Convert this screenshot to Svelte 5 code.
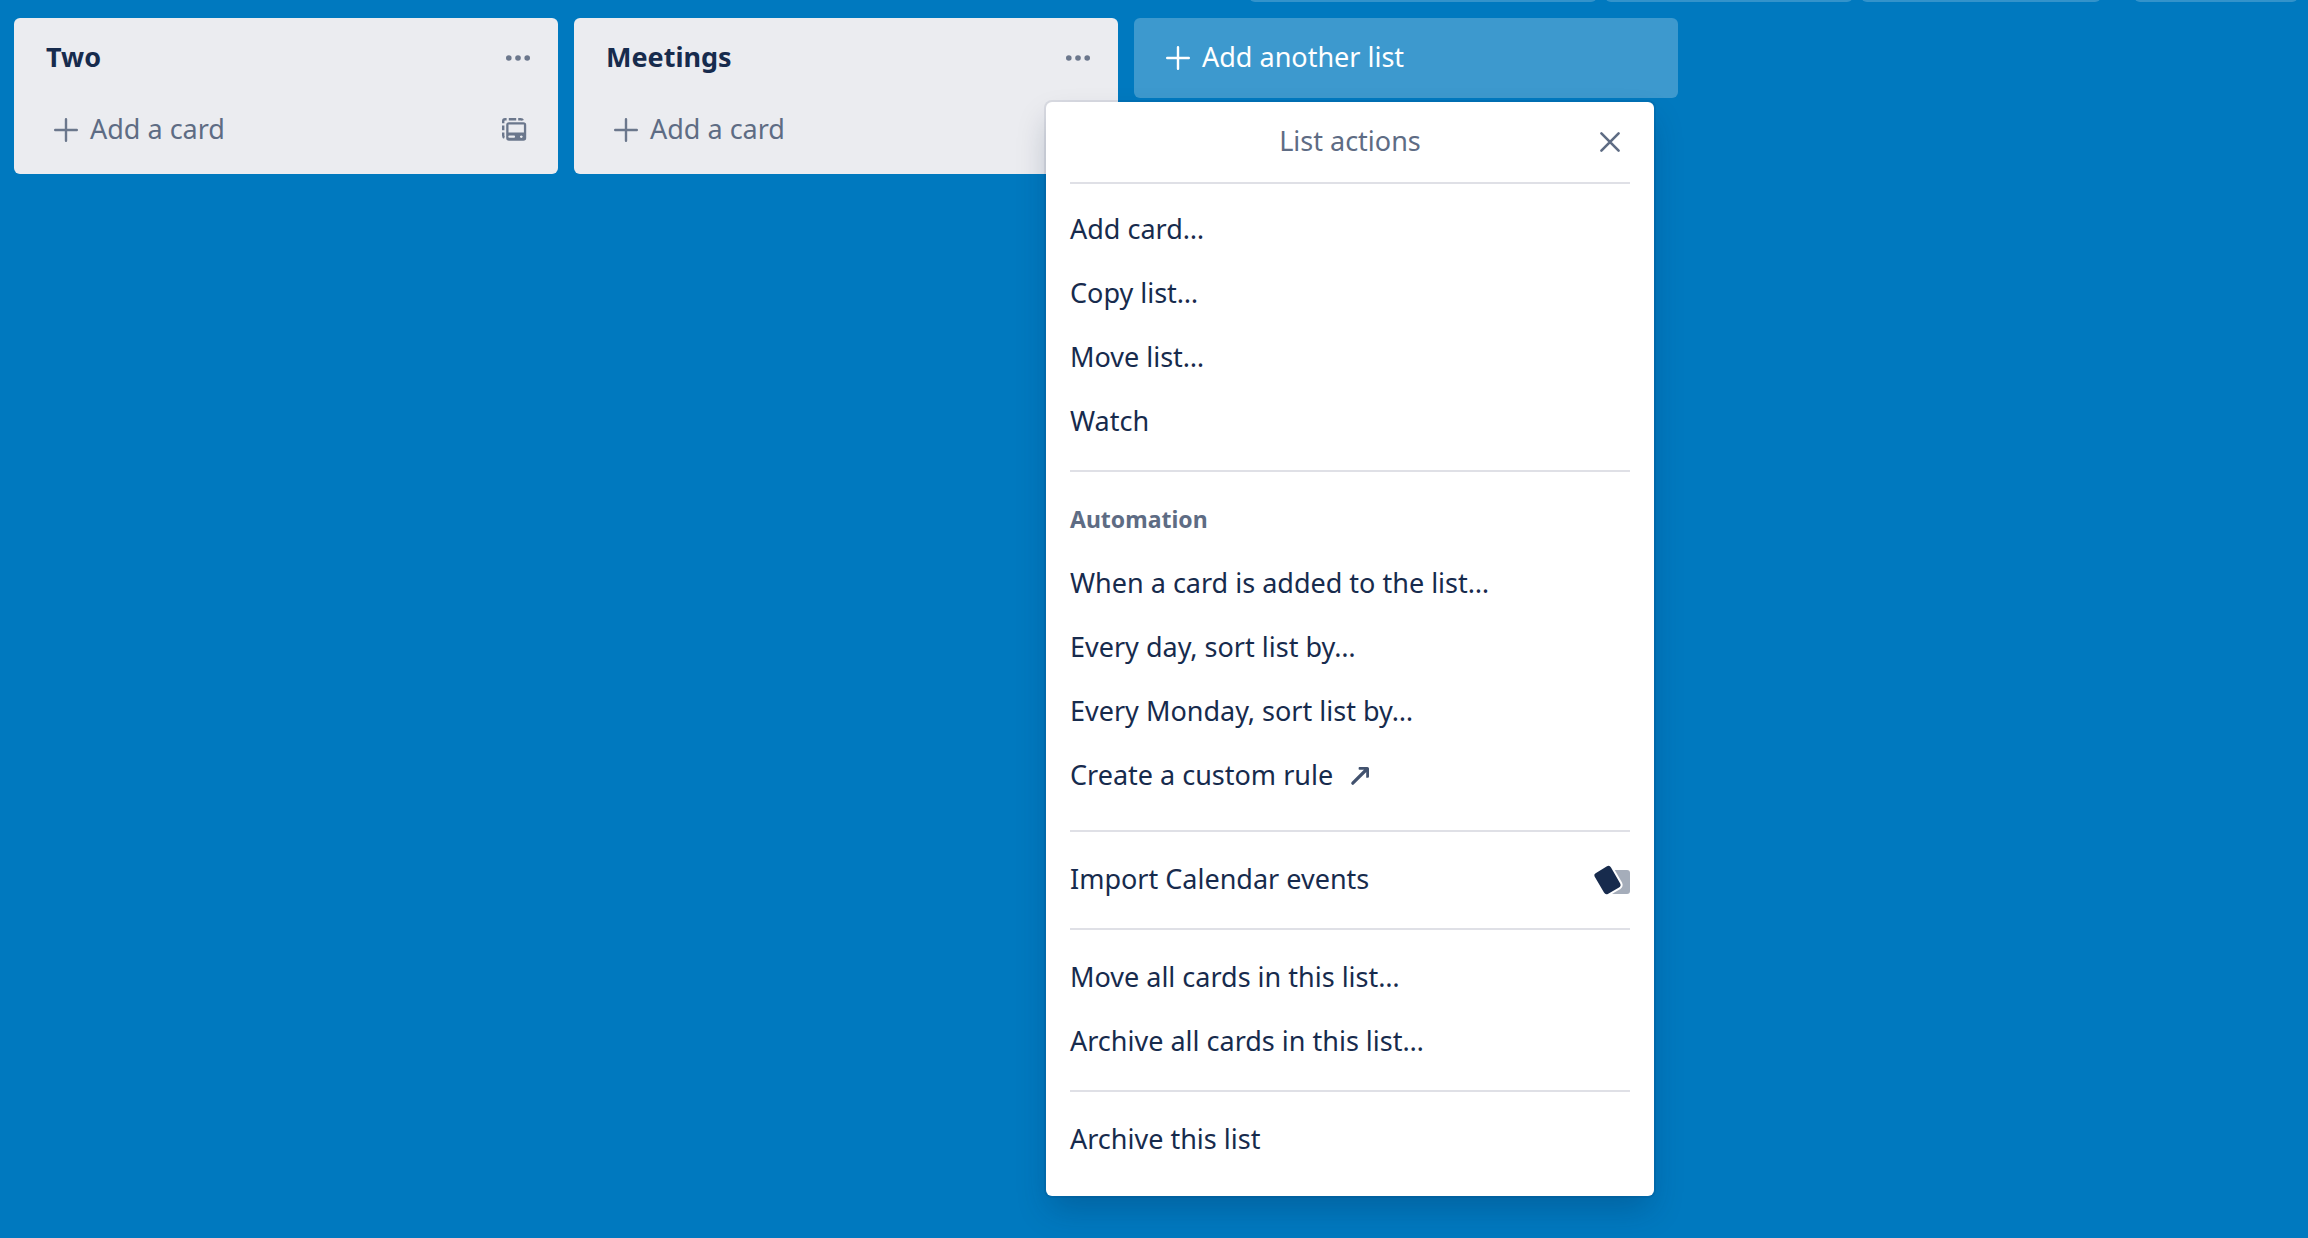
<script>
  const tabs = ['wide', 'medium', 'small', 'menu'];
  const lists = [
    { name: 'Two', open: false },
    { name: 'Meetings', open: true },
  ];
  const groups = [
    { items: ['Add card…', 'Copy list…', 'Move list…', 'Watch'] },
    {
      title: 'Automation',
      items: [
        'When a card is added to the list…',
        'Every day, sort list by…',
        'Every Monday, sort list by…',
        'Create a custom rule',
      ],
    },
    { items: ['Import Calendar events'] },
    { items: ['Move all cards in this list…', 'Archive all cards in this list…'] },
    { items: ['Archive this list'] },
  ];
</script>

{#snippet plus()}
  <svg class="plus" viewBox="0 0 24 24" aria-hidden="true">
    <path d="M12 1.2v21.6M1.2 12h21.6" />
  </svg>
{/snippet}

<div class="page">
  <div class="toolbar" aria-hidden="true">
    {#each tabs as tab}
      <span class="tab {tab}"></span>
    {/each}
  </div>

  <main class="board">
    {#each lists as list}
      <section class="list">
        <header class="list-head">
          <h2 class="label">{list.name}</h2>
          <button class="icon-button" aria-label="List actions for {list.name}">
            <svg viewBox="0 0 24 24" aria-hidden="true">
              <circle cx="2.8" cy="12" r="2.8" />
              <circle cx="12" cy="12" r="2.8" />
              <circle cx="21.2" cy="12" r="2.8" />
            </svg>
          </button>
        </header>
        <div class="list-foot">
          <button class="add-card">{@render plus()}<span class="label">Add a card</span></button>
          <button class="icon-button" aria-label="Create from template">
            <svg viewBox="0 0 24 24" aria-hidden="true">
              <path class="line" d="M1.2 5.2V3Q1.2 1.2 3 1.2H4.6M6.8 1.2H14.2M16.2 1.2H18.6Q20.4 1.2 20.8 2.4M1.2 7.4V12.2M1.2 14.4V17.6Q1.2 19.2 2.4 19.6" />
              <path fill-rule="evenodd" d="M7 4.2H21.4Q24.2 4.2 24.2 7V20Q24.2 22.8 21.4 22.8H7Q4.2 22.8 4.2 20V7Q4.2 4.2 7 4.2ZM6.5 6.5V14.6H21.9V6.5ZM7.4 17.6a1 1 0 0 0 0 2.2H12a1 1 0 0 0 0-2.2ZM19.3 17.4a1.3 1.3 0 1 0 .01 0Z" />
            </svg>
          </button>
        </div>

        {#if list.open}
          <div class="popover" role="dialog" aria-label="List actions">
            <header class="popover-head">
              <span class="label">List actions</span>
              <button class="close" aria-label="Close">
                <svg viewBox="0 0 20 20" aria-hidden="true"><path d="M1.4 1.4l17.2 17.2M18.6 1.4L1.4 18.6" /></svg>
              </button>
            </header>
            {#each groups as group}
              <div class="group">
                {#if group.title}<h3><span class="label">{group.title}</span></h3>{/if}
                <ul>
                  {#each group.items as item}
                    <li>
                      <button class="action">
                        <span class="label">{item}</span>
                        {#if item === 'Create a custom rule'}
                          <svg class="arrow" viewBox="0 0 18 18" aria-hidden="true">
                            <path class="shaft" d="M1.8 16.2L15 3" />
                            <path d="M8.4 0H16.4Q18 0 18 1.6V9.6Q18 10.8 16.8 10.8H15.2V5L13 2.8H8.4Q7.6 2.8 7.6 1.4Q7.6 0 8.4 0Z" />
                          </svg>
                        {:else if item === 'Import Calendar events'}
                          <svg class="cards" viewBox="0 0 36 30" aria-hidden="true">
                            <rect class="back" x="17" y="5" width="19" height="24" rx="3" />
                            <path class="front" d="M1.6 8.2L13 1.2Q15.6 0 17 2.4L26.2 18.4Q27.4 21 25 22.6L13.8 29Q11.4 30 10 27.6L.6 11.6Q-.6 9.6 1.6 8.2Z" />
                          </svg>
                        {/if}
                      </button>
                    </li>
                  {/each}
                </ul>
              </div>
            {/each}
          </div>
        {/if}
      </section>
    {/each}

    <button class="add-list">{@render plus()}<span class="label">Add another list</span></button>
  </main>
</div>

<style>
  :global(body) {
    background: #0079bf;
  }

  .page {
    min-height: 100vh;
    box-sizing: border-box;
    background: #0079bf;
    color: #172b4d;
    font-family: 'Noto Sans', sans-serif;
    font-size: 27px;
    line-height: 38px;
  }

  .page * {
    box-sizing: border-box;
  }

  button {
    margin: 0;
    padding: 0;
    border: 0;
    background: none;
    color: inherit;
    font: inherit;
    text-align: left;
    cursor: pointer;
  }

  h2,
  h3,
  ul {
    margin: 0;
    padding: 0;
    list-style: none;
  }

  svg {
    display: block;
    flex: none;
    overflow: visible;
  }

  /* Every row of text is 40px high, with the text seated a little above the middle. */
  .label {
    display: block;
    padding-bottom: 2px;
  }

  .toolbar {
    display: flex;
    justify-content: flex-end;
    align-items: flex-end;
    gap: 8px;
    height: 2px;
    padding-right: 10px;
    overflow: hidden;
  }

  .tab {
    flex: none;
    height: 64px;
    border-radius: 6px;
    background: rgba(255, 255, 255, 0.2);
  }

  .wide {
    width: 348px;
  }

  .medium {
    width: 248px;
  }

  .small {
    width: 240px;
  }

  .menu {
    width: 164px;
    margin-left: 25px;
  }

  .board {
    display: flex;
    align-items: flex-start;
    gap: 16px;
    padding: 16px 14px;
  }

  .list {
    position: relative;
    flex: 0 1 544px;
    padding: 20px 16px 24px;
    border-radius: 6px;
    background: #ebecf0;
  }

  .list-head,
  .list-foot {
    display: flex;
    align-items: center;
    justify-content: space-between;
  }

  .list-head {
    padding: 0 12px 0 16px;
  }

  .list-foot {
    padding: 32px 16px 0 24px;
  }

  h2 {
    font-size: 27px;
    font-weight: 700;
  }

  .icon-button svg {
    width: 24px;
    height: 24px;
    fill: #6b778c;
  }

  .icon-button .line {
    fill: none;
    stroke: #6b778c;
    stroke-width: 2.4;
  }

  .add-card,
  .add-list {
    display: flex;
    align-items: center;
    gap: 12px;
    color: #5e6c84;
  }

  .plus {
    width: 24px;
    height: 24px;
    fill: none;
    stroke: #6b778c;
    stroke-width: 2.4;
    stroke-linecap: round;
  }

  .add-list {
    flex: 0 1 544px;
    padding: 20px 32px;
    border-radius: 6px;
    background: rgba(255, 255, 255, 0.24);
    color: #fff;
  }

  .add-list .plus {
    stroke: #fff;
  }

  .popover {
    position: absolute;
    z-index: 1;
    top: 84px;
    left: calc(100% - 72px);
    width: 608px;
    padding: 0 24px 8px;
    border-radius: 6px;
    background: #fff;
    box-shadow:
      0 16px 32px -4px rgba(9, 30, 66, 0.25),
      0 0 0 2px rgba(9, 30, 66, 0.08);
  }

  .popover-head {
    display: grid;
    grid-template-columns: 40px 1fr 40px;
    align-items: center;
    height: 80px;
    color: #5e6c84;
    text-align: center;
  }

  .popover-head .label {
    grid-column: 2;
  }

  .close svg {
    width: 20px;
    height: 20px;
    margin: 0 auto;
    fill: none;
    stroke: #5e6c84;
    stroke-width: 2.6;
    stroke-linecap: round;
  }

  .group {
    padding: 16px 0;
    border-top: 2px solid #dfe0e6;
  }

  .group:nth-child(2) {
    padding-top: 14px;
  }

  .group:nth-child(3) {
    padding-bottom: 22px;
  }

  h3 {
    padding: 12px 0;
    color: #5e6c84;
    font-size: 23px;
    font-weight: 700;
  }

  .action {
    display: flex;
    align-items: center;
    gap: 18px;
    width: 100%;
    padding: 12px 0;
  }

  .arrow {
    width: 18px;
    height: 18px;
    fill: #42526e;
  }

  .shaft {
    stroke: #42526e;
    stroke-width: 3.2;
    stroke-linecap: round;
  }

  .cards {
    width: 36px;
    height: 30px;
    margin-left: auto;
  }

  .back {
    fill: #a5adba;
  }

  .front {
    fill: #172b4d;
    stroke: #fff;
    stroke-width: 4;
    paint-order: stroke;
  }
</style>
